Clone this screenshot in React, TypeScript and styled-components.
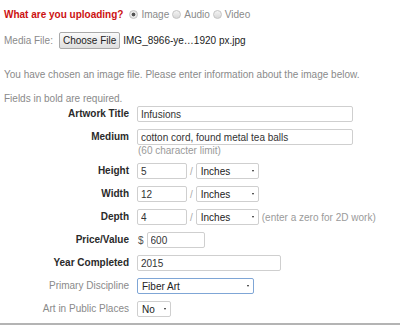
import styled, { createGlobalStyle } from 'styled-components';

const GlobalStyle = createGlobalStyle`
  html, body {
    margin: 0;
    padding: 0;
    background: #ffffff;
  }
  body {
    font-family: 'Liberation Sans', Arial, sans-serif;
    font-size: 10px;
    color: #333333;
  }
`;

const Page = styled.div`
  width: 400px;
  height: 326px;
  display: flex;
  flex-direction: column;
  box-sizing: border-box;
  overflow: hidden;
`;

const Top = styled.div`
  display: flex;
  flex-direction: column;
  padding: 0 4px;
`;

const TypeRow = styled.div`
  display: flex;
  align-items: center;
  height: 14px;
  margin-top: 7px;
`;

const Question = styled.span`
  color: #cc1111;
  font-weight: bold;
  margin-right: 6px;
`;

const RadioLabel = styled.label`
  display: flex;
  align-items: center;
  color: #8a8a8a;
  margin-right: 3px;
`;

const RadioDot = styled.span<{ $checked?: boolean }>`
  width: 7px;
  height: 7px;
  border-radius: 50%;
  border: 1px solid #c4c4c4;
  background: ${(p) =>
    p.$checked
      ? 'radial-gradient(circle, #555 0, #555 1.6px, #e8e8e8 2.2px)'
      : 'linear-gradient(#f4f4f4, #d8d8d8)'};
  margin-right: 3px;
`;

const MediaRow = styled.div`
  display: flex;
  align-items: center;
  margin-top: 11px;
  height: 17px;
`;

const MutedText = styled.span`
  color: #8a8a8a;
`;

const FileButton = styled.button`
  height: 17px;
  margin-left: 6px;
  padding: 0 3px;
  font-family: inherit;
  font-size: 10px;
  color: #222;
  border: 1px solid #a9a9a9;
  border-radius: 2px;
  background: linear-gradient(#fafafa, #dedede);
`;

const FileName = styled.span`
  color: #222;
  margin-left: 3px;
`;

const Info = styled.p<{ $top: number }>`
  margin: 0;
  color: #8a8a8a;
  margin-top: ${(p) => p.$top}px;
  line-height: 12px;
`;

const Form = styled.div`
  display: flex;
  flex-direction: column;
  gap: 7px;
  padding-left: 4px;
  margin-top: 1px;
`;

const Row = styled.div`
  display: grid;
  grid-template-columns: 125px auto;
  column-gap: 8px;
  align-items: start;
`;

const Label = styled.span<{ $required?: boolean }>`
  text-align: right;
  line-height: 16px;
  font-weight: ${(p) => (p.$required ? 'bold' : 'normal')};
  color: ${(p) => (p.$required ? '#2a2a2a' : '#8a8a8a')};
`;

const Field = styled.div`
  display: flex;
  align-items: center;
  flex-wrap: wrap;
`;

const TextInput = styled.input<{ $w: number }>`
  width: ${(p) => p.$w}px;
  height: 16px;
  box-sizing: border-box;
  padding: 0 3px;
  border: 1px solid #cfcfcf;
  border-radius: 2px;
  font-family: inherit;
  font-size: 10px;
  color: #333;
  outline: none;
`;

const Note = styled.div`
  flex-basis: 100%;
  color: #9a9a9a;
  line-height: 11px;
  padding-left: 1px;
`;

const Slash = styled.span`
  color: #aaa;
  margin: 0 3px 0 3px;
`;

const Dollar = styled.span`
  color: #555;
  margin: 0 3px 0 1px;
`;

const Select = styled.div<{ $w: number; $focus?: boolean }>`
  width: ${(p) => p.$w}px;
  height: 16px;
  box-sizing: border-box;
  display: flex;
  align-items: center;
  justify-content: space-between;
  padding: 0 4px 0 4px;
  border: 1px solid ${(p) => (p.$focus ? '#7fa6d6' : '#cfcfcf')};
  border-radius: 2px;
  background: #fff;
  color: #222;
`;

const Arrow = styled.span`
  width: 0;
  height: 0;
  border-left: 1.5px solid transparent;
  border-right: 1.5px solid transparent;
  border-top: 2.5px solid #222;
`;

const Hint = styled.span`
  color: #9a9a9a;
  margin-left: 3px;
`;

const Divider = styled.div`
  margin-top: auto;
  height: 2px;
  background: #b4b4b4;
  margin-bottom: 1px;
`;

const UnitSelect = () => (
  <Select $w={63}>
    Inches
    <Arrow />
  </Select>
);

export default function App() {
  return (
    <Page>
      <GlobalStyle />
      <Top>
        <TypeRow>
          <Question>What are you uploading?</Question>
          <RadioLabel>
            <RadioDot $checked />
            Image
          </RadioLabel>
          <RadioLabel>
            <RadioDot />
            Audio
          </RadioLabel>
          <RadioLabel>
            <RadioDot />
            Video
          </RadioLabel>
        </TypeRow>
        <MediaRow>
          <MutedText>Media File:</MutedText>
          <FileButton>Choose File</FileButton>
          <FileName>IMG_8966-ye…1920 px.jpg</FileName>
        </MediaRow>
        <Info $top={20}>
          You have chosen an image file. Please enter information about the image below.
        </Info>
        <Info $top={12}>Fields in bold are required.</Info>
      </Top>
      <Form>
        <Row>
          <Label $required>Artwork Title</Label>
          <Field>
            <TextInput $w={216} defaultValue="Infusions" />
          </Field>
        </Row>
        <Row>
          <Label $required>Medium</Label>
          <Field>
            <TextInput $w={216} defaultValue="cotton cord, found metal tea balls" />
            <Note>(60 character limit)</Note>
          </Field>
        </Row>
        <Row>
          <Label $required>Height</Label>
          <Field>
            <TextInput $w={50} defaultValue="5" />
            <Slash>/</Slash>
            <UnitSelect />
          </Field>
        </Row>
        <Row>
          <Label $required>Width</Label>
          <Field>
            <TextInput $w={50} defaultValue="12" />
            <Slash>/</Slash>
            <UnitSelect />
          </Field>
        </Row>
        <Row>
          <Label $required>Depth</Label>
          <Field>
            <TextInput $w={50} defaultValue="4" />
            <Slash>/</Slash>
            <UnitSelect />
            <Hint>(enter a zero for 2D work)</Hint>
          </Field>
        </Row>
        <Row>
          <Label $required>Price/Value</Label>
          <Field>
            <Dollar>$</Dollar>
            <TextInput $w={58} defaultValue="600" />
          </Field>
        </Row>
        <Row>
          <Label $required>Year Completed</Label>
          <Field>
            <TextInput $w={144} defaultValue="2015" />
          </Field>
        </Row>
        <Row>
          <Label>Primary Discipline</Label>
          <Field>
            <Select $w={117} $focus>
              Fiber Art
              <Arrow />
            </Select>
          </Field>
        </Row>
        <Row>
          <Label>Art in Public Places</Label>
          <Field>
            <Select $w={34}>
              No
              <Arrow />
            </Select>
          </Field>
        </Row>
      </Form>
      <Divider />
    </Page>
  );
}
